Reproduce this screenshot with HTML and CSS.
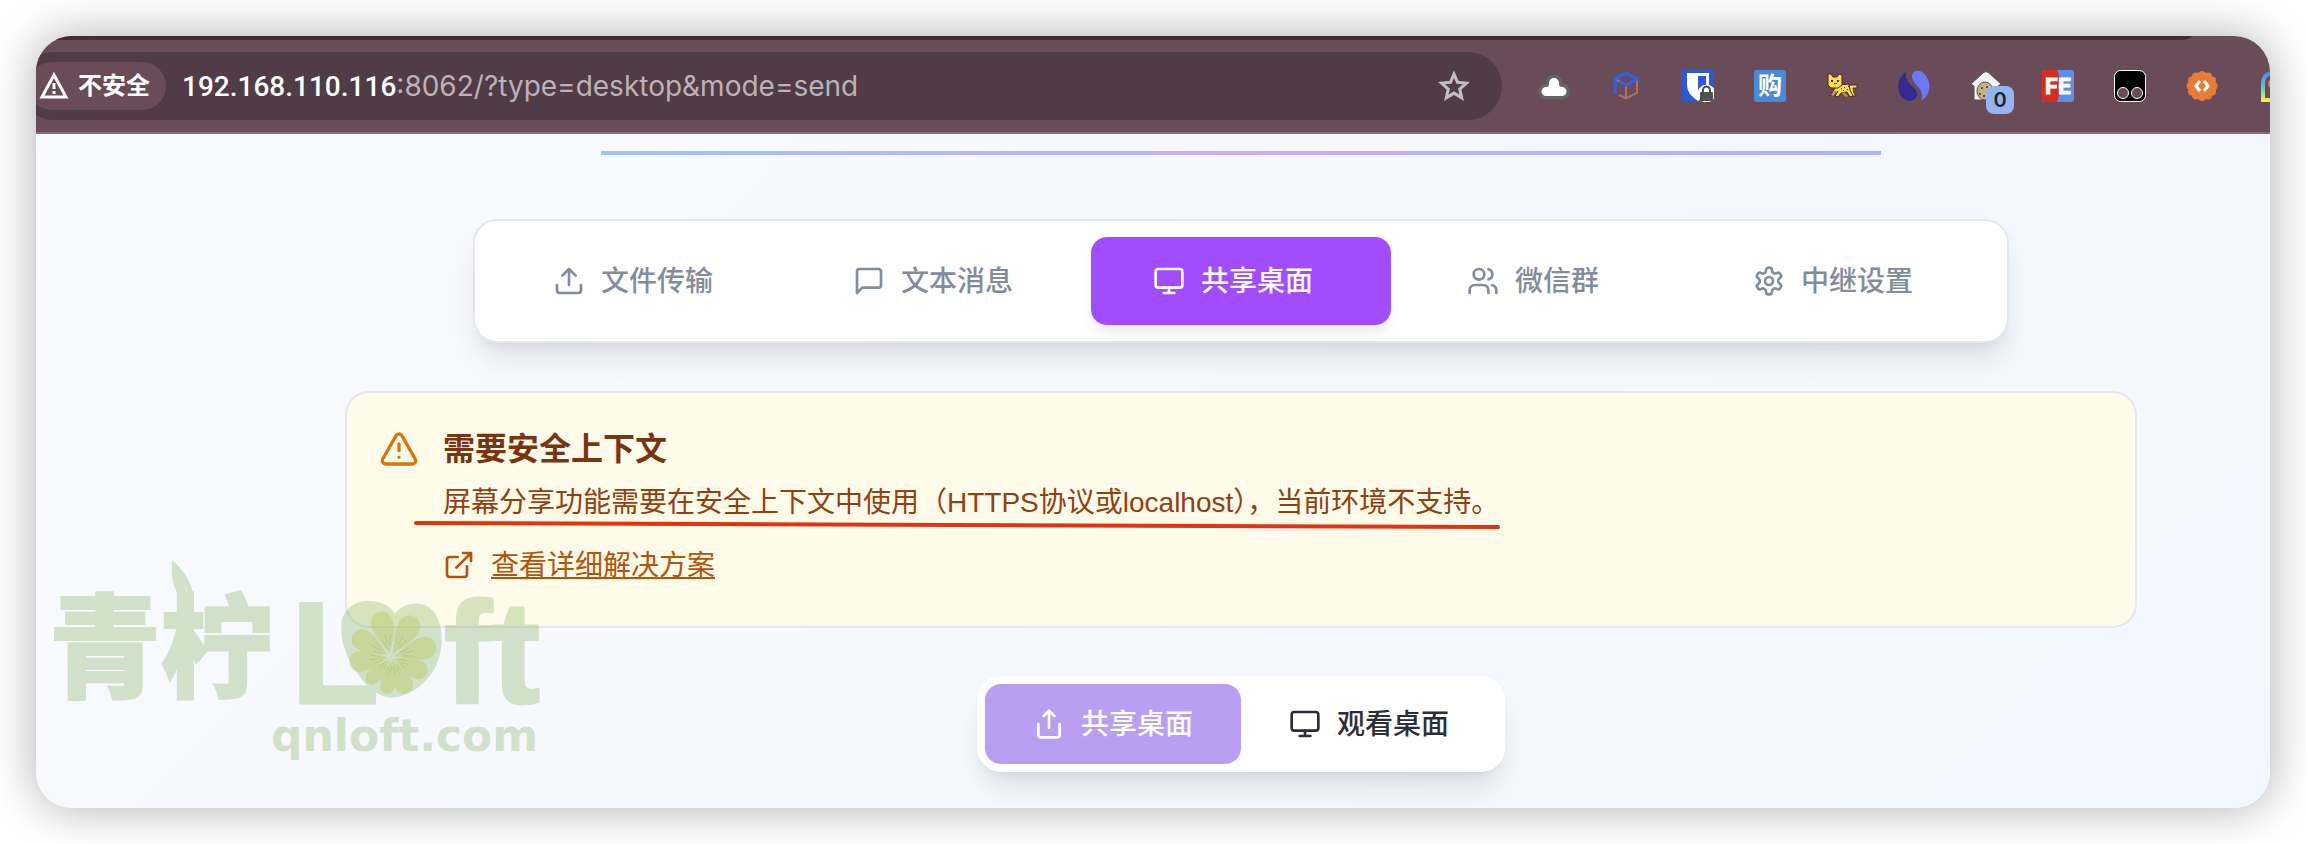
FILE: index.html
```html
<!DOCTYPE html>
<html lang="zh-CN">
<head>
    <meta charset="UTF-8">
    <meta name="viewport" content="width=device-width, initial-scale=1.0">
    <title>共享桌面</title>
    <link rel="stylesheet" href="styles.css">
</head>
<body>
    <div class="window">
        <!-- Browser toolbar -->
        <header class="toolbar">
            <div class="address-bar">
                <button class="security-chip">
                    <svg width="32" height="32" viewBox="0 0 32 32" fill="none" stroke="currentColor" stroke-width="3"><path d="M16 5 28 27H4Z"/><path d="M16 13v6M16 21v3"/></svg>
                    <span>不安全</span>
                </button>
                <div class="url" role="textbox" aria-label="地址"><span class="host">192.168.110.116</span>:8062/?type=desktop&amp;mode=send</div>
                <button class="star" aria-label="收藏">
                    <svg width="32" height="32" viewBox="0 0 32 32" fill="none" stroke="currentColor" stroke-width="3"><path d="m16 4 3.500 8.300 9 .8-6.800 5.900 2 8.800L16 23.100l-7.700 4.700 2-8.800-6.800-5.900 9-.8Z"/></svg>
                </button>
            </div>
            <div class="extensions">
                <button aria-label="云">
                    <svg width="32" height="32" viewBox="0 0 32 32"><path class="cloud" d="M8 26a4.500 4.500 0 0 1 0-9c2 0 3-1 3-4a5 5 0 0 1 10 0c0 3 1 4 3 4a4.500 4.500 0 0 1 0 9Z"/></svg>
                </button>
                <button aria-label="立方体">
                    <svg width="32" height="32" viewBox="0 0 32 32" fill="none" stroke-width="2"><path d="m5 9 11 6 11-6v14l-11 5.500L9 25M16 15v13" stroke="#a87562"/><path d="M5 24V9l11-6 11 6-11 6-7-4" stroke="#2b62f2" stroke-width="3"/></svg>
                </button>
                <button aria-label="密码库">
                    <svg width="32" height="32" viewBox="0 0 32 32"><rect width="32" height="32" rx="2" fill="#2b59d6"/><path d="M5 3h22v12c0 7-5 12-11 16C10 27 5 22 5 15Z" fill="#fff"/><path d="M16 6h8v10c0 4-3 7-8 10Z" fill="#2b59d6"/><circle cx="24.500" cy="23.500" r="9" fill="#fff"/><rect x="18" y="22" width="13" height="9" rx="1" fill="#505050"/><path d="M21 23v-3a3.500 3.500 0 0 1 7 0v3" fill="none" stroke="#505050" stroke-width="2"/></svg>
                </button>
                <button class="shop">购</button>
                <button aria-label="猎豹">
                    <svg width="32" height="32" viewBox="0 0 32 32"><g stroke="#5b1d31" stroke-width="1" fill="#f8e248"><path d="m21 17 3-2h7v3h-4l1 5 2 3h-3l-4-4Z"/><path d="m13 15 10-1 1 6 3 6-3 1-3-5-6 1-3 4-3-1 3-5-4 4-4 1 5-8Z"/><path d="M2 4 5 4l2 3h4l2-3 3 1v10l-4 3H5l-3-3Z"/></g><path d="m5 25 4-5 2 2-4 4ZM18 22l4 4-2 1-4-4Z" fill="#c99a34"/><path d="M5 10h2v2H5zM11 10h2v2h-2zM8 13h3v1H8zM15 18h1v1h-1zM18 17h1v1h-1zM21 19h1v1h-1zM17 20h1v1h-1zM22 16h1v1h-1z" fill="#5b1d31"/></svg>
                </button>
                <button aria-label="双鱼">
                    <svg width="32" height="32" viewBox="0 0 32 32"><path d="M8 2C-2 8-2 23 6 29c6 4 13 1 13-5 0-8-13-9-11-22Z" fill="#352a91"/><path d="M14 7c0-8 10-8 14-1 6 9 4 19-5 25 5-13-8-15-9-24Z" fill="#6b78fa"/></svg>
                </button>
                <button class="has-badge" aria-label="小屋">
                    <svg width="32" height="32" viewBox="0 0 32 32"><path d="M1 14 13 3q3-3 6 0l12 11-3 2v14H4V16Z" fill="#f3f3f3" stroke="#555" stroke-width="1"/><ellipse cx="15" cy="21" rx="8" ry="9" fill="#c9b184" stroke="#555"/><path d="M12 17v2M17 16v2M10 23v2M14 25v2" stroke="#5d513c" stroke-width="2"/></svg>
                    <span class="badge">0</span>
                </button>
                <button aria-label="FE助手">
                    <svg width="32" height="32" viewBox="0 0 32 32"><rect width="32" height="32" rx="3" fill="#5b8fe8"/><path d="M3 0h12l3 9-2 7 2 7-3 9H3a3 3 0 0 1-3-3V3a3 3 0 0 1 3-3Z" fill="#d62c20"/><text x="3" y="24" class="fe-text">FE</text></svg>
                </button>
                <button aria-label="脚本管理">
                    <svg width="32" height="32" viewBox="0 0 32 32"><rect x=".5" y=".5" width="31" height="31" rx="6" fill="#000" stroke="#fff"/><g fill="#6a4b58" stroke="#fff"><circle cx="9" cy="23" r="5.500"/><circle cx="23" cy="23" r="5.500"/></g></svg>
                </button>
                <button aria-label="代码">
                    <svg width="32" height="32" viewBox="0 0 32 32"><g fill="#e97b35"><circle cx="16" cy="16" r="13"/><circle cx="16" cy="5" r="4"/><circle cx="22" cy="6.500" r="4"/><circle cx="26" cy="10.500" r="4"/><circle cx="27.500" cy="16" r="4"/><circle cx="26" cy="21.500" r="4"/><circle cx="22" cy="25.500" r="4"/><circle cx="16" cy="27" r="4"/><circle cx="10" cy="25.500" r="4"/><circle cx="6" cy="21.500" r="4"/><circle cx="4.500" cy="16" r="4"/><circle cx="6" cy="10.500" r="4"/><circle cx="10" cy="6.500" r="4"/></g><path d="m14 11-4 5 4 5M18 11l4 5-4 5" fill="none" stroke="#fff" stroke-width="3"/></svg>
                </button>
                <button aria-label="彩虹">
                    <svg width="32" height="32" viewBox="0 0 32 32"><defs><linearGradient id="rainbow" x2="0" y2="1"><stop stop-color="#4b8dea"/><stop offset=".6" stop-color="#63d0c0"/><stop offset="1" stop-color="#f4ef3a"/></linearGradient></defs><path d="M5 30V14Q5 3 16 3h14v27Z" fill="none" stroke="url(#rainbow)" stroke-width="4"/><circle cx="14" cy="14" r="4" fill="#ee7560"/></svg>
                </button>
            </div>
        </header>

        <!-- Page content -->
        <main class="page">
            <div class="divider"></div>

            <nav class="tabs">
                <button class="tab">
                    <svg class="icon" viewBox="0 0 24 24"><path d="M12 3v12M17 8l-5-5-5 5M21 15v4a2 2 0 0 1-2 2H5a2 2 0 0 1-2-2v-4"/></svg>
                    <span>文件传输</span>
                </button>
                <button class="tab">
                    <svg class="icon" viewBox="0 0 24 24"><path d="M21 15a2 2 0 0 1-2 2H7l-4 4V5a2 2 0 0 1 2-2h14a2 2 0 0 1 2 2z"/></svg>
                    <span>文本消息</span>
                </button>
                <button class="tab active">
                    <svg class="icon" viewBox="0 0 24 24"><rect width="20" height="14" x="2" y="3" rx="2"/><path d="M8 21h8M12 17v4"/></svg>
                    <span>共享桌面</span>
                </button>
                <button class="tab">
                    <svg class="icon" viewBox="0 0 24 24"><path d="M16 21v-2a4 4 0 0 0-4-4H6a4 4 0 0 0-4 4v2"/><circle cx="9" cy="7" r="4"/><path d="M22 21v-2a4 4 0 0 0-3-3.870M16 3.130a4 4 0 0 1 0 7.750"/></svg>
                    <span>微信群</span>
                </button>
                <button class="tab">
                    <svg class="icon" viewBox="0 0 24 24"><path d="M12.220 2h-.44a2 2 0 0 0-2 2v.18a2 2 0 0 1-1 1.730l-.43.25a2 2 0 0 1-2 0l-.15-.08a2 2 0 0 0-2.730.73l-.22.38a2 2 0 0 0 .73 2.730l.15.1a2 2 0 0 1 1 1.720v.51a2 2 0 0 1-1 1.740l-.15.09a2 2 0 0 0-.73 2.730l.22.38a2 2 0 0 0 2.730.73l.15-.08a2 2 0 0 1 2 0l.43.25a2 2 0 0 1 1 1.730V20a2 2 0 0 0 2 2h.44a2 2 0 0 0 2-2v-.18a2 2 0 0 1 1-1.730l.43-.25a2 2 0 0 1 2 0l.15.08a2 2 0 0 0 2.730-.73l.22-.39a2 2 0 0 0-.73-2.730l-.15-.08a2 2 0 0 1-1-1.740v-.5a2 2 0 0 1 1-1.740l.15-.09a2 2 0 0 0 .73-2.730l-.22-.38a2 2 0 0 0-2.730-.73l-.15.08a2 2 0 0 1-2 0l-.43-.25a2 2 0 0 1-1-1.730V4a2 2 0 0 0-2-2z"/><circle cx="12" cy="12" r="3"/></svg>
                    <span>中继设置</span>
                </button>
            </nav>

            <section class="alert">
                <svg class="icon alert-icon" viewBox="0 0 24 24"><path d="m21.730 18-8-14a2 2 0 0 0-3.480 0l-8 14A2 2 0 0 0 4 21h16a2 2 0 0 0 1.730-3M12 9v4M12 17h.01"/></svg>
                <div class="alert-body">
                    <h2>需要安全上下文</h2>
                    <p>屏幕分享功能需要在安全上下文中使用（HTTPS协议或localhost），当前环境不支持。
                        <svg class="underline" viewBox="0 0 1088 8" preserveAspectRatio="none"><path d="M3 2 1085 6"/></svg>
                    </p>
                    <a href="#">
                        <svg class="icon" viewBox="0 0 24 24"><path d="M15 3h6v6M10 14 21 3M18 13v6a2 2 0 0 1-2 2H5a2 2 0 0 1-2-2V8a2 2 0 0 1 2-2h6"/></svg>
                        <span>查看详细解决方案</span>
                    </a>
                </div>
            </section>

            <div class="mode-switch">
                <button class="mode selected" disabled>
                    <svg class="icon" viewBox="0 0 24 24"><path d="M4 12v8a2 2 0 0 0 2 2h12a2 2 0 0 0 2-2v-8M16 6l-4-4-4 4M12 2v13"/></svg>
                    <span>共享桌面</span>
                </button>
                <button class="mode">
                    <svg class="icon" viewBox="0 0 24 24"><rect width="20" height="14" x="2" y="3" rx="2"/><path d="M8 21h8M12 17v4"/></svg>
                    <span>观看桌面</span>
                </button>
            </div>
        </main>

        <!-- Watermark -->
        <svg class="watermark" width="520" height="212" viewBox="0 0 520 212">
            <defs>
                <path id="slice" d="M0-4C-5-14-12-26-11-36c1-14 21-14 22 0C12-26 5-14 0-4Z"/>
                <path id="seed" d="m-4-19 2 9M0-24v10M5-22l-3 10"/>
            </defs>
            <g class="mark">
                <text class="mark-cn" x="13" y="129">青柠</text>
                <text class="mark-en" x="255" y="143">L</text>
                <text class="mark-en" x="408" y="143">ft</text>
                <text class="mark-url" x="235" y="191">qnloft.com</text>
                <path d="M136 0c9 8 20 20 21 36l-1 7h-3l-3-17 0 16c-11-8-16-21-14-42Z"/>
                <path d="M359 54c10-14 32-14 41 1 9 16 7 42-4 58-10 14-23 23-41 25-14-2-24-11-33-24-13-16-19-38-16-54 3-12 14-19 26-19 12 0 22 4 27 13Z"/>
            </g>
            <g class="slices">
                <g transform="translate(355 97) rotate(-15)"><use href="#slice"/><use class="seed" href="#seed"/></g>
                <g transform="translate(355 97) rotate(31)"><use href="#slice"/><use class="seed" href="#seed"/></g>
                <g transform="translate(355 97) rotate(75)"><use href="#slice"/><use class="seed" href="#seed"/></g>
                <g transform="translate(355 97) rotate(115) scale(.85)"><use href="#slice"/><use class="seed" href="#seed"/></g>
                <g transform="translate(355 97) rotate(155) scale(.85)"><use href="#slice"/><use class="seed" href="#seed"/></g>
                <g transform="translate(355 97) rotate(187) scale(.65 .8)"><use href="#slice"/><use class="seed" href="#seed"/></g>
                <g transform="translate(355 97) rotate(222) scale(.65 .75)"><use href="#slice"/><use class="seed" href="#seed"/></g>
                <g transform="translate(355 97) rotate(262) scale(.95 .9)"><use href="#slice"/><use class="seed" href="#seed"/></g>
                <g transform="translate(355 97) rotate(301) scale(.95)"><use href="#slice"/><use class="seed" href="#seed"/></g>
            </g>
        </svg>
    </div>
</body>
</html>
```
FILE: styles.css
```css
* {
    margin: 0;
    padding: 0;
    box-sizing: border-box;
}
:root {
    --toolbar: #6a4b58;
    --toolbar-dark: #503c46;
    --purple: #a14dfd;
    --gray-text: #838c9c;
    --border: #e5e7eb;
}
body {
    font-family: Inter, "Noto Sans CJK SC", sans-serif;
    font-size: 28px;
    line-height: 40px;
    background: #fff;
    padding: 36px;
}
button {
    font: inherit;
    color: inherit;
    background: none;
    border: none;
    cursor: pointer;
}
svg {
    display: block;
    flex-shrink: 0;
}
.icon {
    width: 32px;
    height: 32px;
    fill: none;
    stroke: currentColor;
    stroke-width: 2;
    stroke-linecap: round;
    stroke-linejoin: round;
}
.window {
    position: relative;
    min-height: calc(100vh - 72px);
    border-radius: 36px;
    overflow: hidden;
    background: linear-gradient(135deg, #f9fafe, #f5f8fd 50%, #f2f6fe);
    box-shadow: 0 0 48px rgba(0, 0, 0, 0.32);
}
/* Browser toolbar */
.toolbar {
    position: relative;
    display: flex;
    align-items: center;
    gap: 36px;
    height: 98px;
    padding-top: 4px;
    background: var(--toolbar);
    border-bottom: 2px solid #8a6d7b;
    overflow: hidden;
}
.toolbar::before {
    content: "";
    position: absolute;
    top: 0;
    left: 0;
    right: 78px;
    height: 4px;
    background: #432d35;
    border-bottom-right-radius: 12px 4px;
}
.address-bar {
    flex: 1;
    display: flex;
    align-items: center;
    height: 68px;
    margin-left: -16px;
    padding: 0 32px 0 8px;
    border-radius: 34px;
    background: var(--toolbar-dark);
}
.security-chip {
    display: flex;
    align-items: center;
    gap: 8px;
    height: 48px;
    padding: 0 16px 0 10px;
    border-radius: 24px;
    background: var(--toolbar);
    color: #fff;
    font-size: 24px;
    font-weight: 700;
}
.url {
    flex: 1;
    margin-left: 16px;
    color: #bdb2b7;
}
.host {
    color: #fff;
    font-family: Roboto, sans-serif;
    font-weight: 500;
}
.star {
    color: #c3bfc1;
}
.extensions {
    display: flex;
    gap: 40px;
    margin-right: -20px;
}
.extensions button {
    width: 32px;
    height: 32px;
}
.cloud {
    fill: #fff;
    stroke: #646464;
    stroke-width: 7;
    paint-order: stroke;
}
.extensions .shop {
    border-radius: 3px;
    background: #4a8bd8;
    color: #fff;
    font-size: 24px;
    font-weight: 700;
    line-height: 32px;
}
.has-badge {
    position: relative;
}
.badge {
    position: absolute;
    left: 16px;
    top: 16px;
    width: 28px;
    height: 28px;
    border-radius: 8px;
    background: #95b4f2;
    color: #1f2329;
    font-size: 20px;
    font-weight: 600;
    line-height: 28px;
    text-align: center;
}
.fe-text {
    font: 700 22px Inter, sans-serif;
    fill: #fff;
    stroke: #fff;
    stroke-width: 1;
}
/* Page content */
.page {
    display: flex;
    flex-direction: column;
    align-items: center;
    padding: 17px 0 36px 176px;
}
.divider {
    width: 100%;
    max-width: 1280px;
    height: 4px;
    background: linear-gradient(90deg, #9cc4ff, #c9adff 50%, #abb3ff);
}
.tabs {
    display: flex;
    width: 100%;
    max-width: 1536px;
    margin-top: 64px;
    padding: 16px;
    border: 2px solid var(--border);
    border-radius: 24px;
    background: #fff;
    box-shadow: 0 20px 30px -6px rgba(0, 0, 0, 0.1), 0 8px 12px -8px rgba(0, 0, 0, 0.1);
}
.tab {
    flex: 1;
    display: flex;
    align-items: center;
    justify-content: center;
    gap: 16px;
    height: 88px;
    padding-right: 16px;
    border-radius: 16px;
    color: var(--gray-text);
    font-weight: 500;
}
.tab.active {
    background: var(--purple);
    color: #fff;
    box-shadow: 0 8px 12px -2px rgba(0, 0, 0, 0.1);
}
.alert {
    display: flex;
    gap: 24px;
    width: 100%;
    max-width: 1792px;
    margin-top: 48px;
    padding: 32px 32px 41px;
    border: 2px solid var(--border);
    border-radius: 24px;
    background: #fffbeb;
    color: #92400e;
}
.alert-icon {
    width: 40px;
    height: 40px;
    margin-top: 4px;
    color: #d97706;
}
.alert h2 {
    color: #78350f;
    font-size: 32px;
    font-weight: 600;
    line-height: 48px;
}
.alert p {
    position: relative;
    margin-top: 10px;
    font-family: "Liberation Sans", "Noto Sans CJK SC", sans-serif;
}
.underline {
    position: absolute;
    left: -30px;
    top: 38px;
    width: 1088px;
    height: 8px;
    fill: none;
    stroke: #e5330f;
    stroke-width: 4;
    stroke-linecap: round;
}
.alert a {
    display: flex;
    align-items: center;
    gap: 16px;
    width: fit-content;
    margin-top: 22px;
    color: #b45309;
    text-decoration: none;
}
.alert a span {
    text-decoration: underline;
}
.mode-switch {
    display: flex;
    margin-top: 48px;
    padding: 8px;
    border-radius: 24px;
    background: #fff;
    box-shadow: 0 20px 30px -6px rgba(0, 0, 0, 0.1), 0 8px 12px -8px rgba(0, 0, 0, 0.1);
}
.mode {
    display: flex;
    align-items: center;
    gap: 16px;
    height: 80px;
    padding: 0 48px;
    border-radius: 16px;
    color: #2d2d3a;
    font-weight: 500;
}
.mode.selected {
    background: #b99ef1;
    color: #fff;
}
/* Watermark */
.watermark {
    position: absolute;
    left: 0;
    bottom: 36px;
    pointer-events: none;
}
.mark {
    fill: #7dad54;
    opacity: 0.3;
}
.mark-cn {
    font: 900 112px "Noto Sans CJK SC", sans-serif;
    stroke: #7dad54;
    stroke-width: 2;
}
.mark-en {
    font: 700 144px "Liberation Sans", sans-serif;
    stroke: #7dad54;
    stroke-width: 3;
    stroke-linejoin: round;
}
.mark-url {
    font: 700 44px "DejaVu Sans", sans-serif;
}
.slices {
    fill: #bfce70;
    opacity: 0.5;
}
.seed {
    fill: none;
    stroke: #93b83c;
    stroke-width: 1;
}
```
